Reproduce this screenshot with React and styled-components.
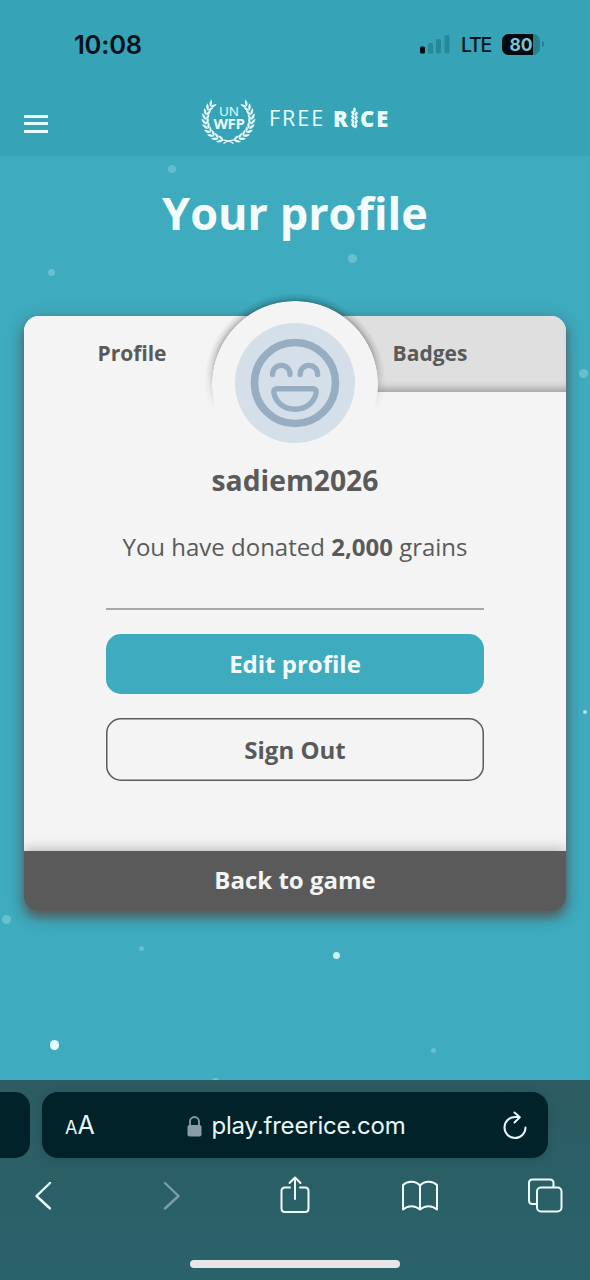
import React from "react";
import styled, { createGlobalStyle } from "styled-components";

const GlobalStyle = createGlobalStyle`
  * { box-sizing: border-box; }
  body { margin: 0; background: #3eabbe; }
  button { border: 0; padding: 0; margin: 0; background: none; font: inherit; color: inherit; }
`;

const Screen = styled.div`
  position: relative;
  display: flex;
  flex-direction: column;
  width: 590px;
  height: 1280px;
  overflow: hidden;
  background: #3eabbe;
  font-family: "Open Sans", sans-serif;
  color: #5a5a5a;
`;

const Speck = styled.i`
  position: absolute;
  left: ${(p) => p.$x}px;
  top: ${(p) => p.$y}px;
  width: ${(p) => p.$size}px;
  height: ${(p) => p.$size}px;
  margin: ${(p) => -p.$size / 2}px;
  border-radius: 50%;
  background: #e6fbff;
  opacity: ${(p) => p.$alpha};
  filter: blur(0.5px);
`;

const TopArea = styled.div`
  position: relative;
  flex: none;
  height: 156px;
  background: #37a3b7;
`;

const StatusBar = styled.div`
  display: flex;
  align-items: center;
  justify-content: space-between;
  height: 88px;
  padding: 0 50px 0 74px;
  font-family: Inter, sans-serif;
  color: #03101a;
`;

const Clock = styled.span`
  font-size: 25.5px;
  font-weight: 600;
  letter-spacing: -0.2px;
`;

const StatusIcons = styled.div`
  display: flex;
  align-items: center;
`;

const Network = styled.span`
  margin: 1px 0 0 11px;
  width: 41px;
  font-size: 19.5px;
  font-weight: 500;
  letter-spacing: -1.2px;
`;

const Battery = styled.div`
  position: relative;
  width: 38px;
  height: 21px;
  border-radius: 6.5px;
  background: linear-gradient(90deg, #020a10 31px, #25808f 31px);
  color: #7fc3cf;
  font-size: 17.5px;
  font-weight: 700;
  line-height: 21px;
  text-align: center;
  &::after {
    content: "";
    position: absolute;
    right: -4px;
    top: 7.5px;
    width: 2px;
    height: 6px;
    border-radius: 0 2px 2px 0;
    background: #25808f;
  }
`;

const NavBar = styled.header`
  display: flex;
  align-items: flex-start;
  padding: 9px 24px 0;
  color: #e9fdff;
`;

const MenuButton = styled.button`
  display: flex;
  flex-direction: column;
  gap: 4.5px;
  width: 24px;
  margin: 17.500px 153px 0 0;
  span { height: 3px; background: #e9fdff; }
`;

const Brand = styled.div`
  display: flex;
  height: 48px;
`;

const Emblem = styled.div`
  position: relative;
  width: 56px;
  height: 48px;
`;

const EmblemText = styled.div`
  position: absolute;
  inset: 8px 0 0 0;
  display: flex;
  flex-direction: column;
  align-items: center;
  font-size: 13.5px;
  line-height: 12px;
  b { font-size: 15px; letter-spacing: -0.4px; }
`;

const Wordmark = styled.div`
  display: flex;
  margin: 6px 0 0 11px;
  font-size: 22px;
  line-height: 30px;
`;

const Free = styled.span`
  width: 64px;
  font-weight: 400;
  margin-left: 1px;
  font-size: 21.5px;
  letter-spacing: 2px;
`;

const Rice = styled.span`
  display: flex;
  font-weight: 800;
  letter-spacing: 2px;
  svg { margin: 4px 0 0 -1px; }
`;

const Title = styled.h1`
  position: relative;
  flex: none;
  margin: 24px 0 0;
  height: 136px;
  font-size: 45px;
  line-height: 66px;
  font-weight: 700;
  text-align: center;
  color: #f4fbfc;
`;

const Card = styled.main`
  position: relative;
  flex: none;
  display: flex;
  flex-direction: column;
  align-items: center;
  width: 542px;
  height: 595px;
  margin: 0 24px;
  border-radius: 15px;
  background: linear-gradient(#f4f4f4 560px, #5a5a5a 560px);
  box-shadow: 0 6px 11px rgba(90, 80, 80, 0.85), 0 4px 18px rgba(60, 80, 85, 0.3);
`;

const Tabs = styled.div`
  display: grid;
  grid-template-columns: 271px 271px;
  width: 100%;
  height: 75.5px;
  border-radius: 15px 15px 0 0;
  overflow: hidden;
`;

const Tab = styled.button`
  padding-right: ${(p) => (p.$active ? 55 : 1)}px;
  display: block;
  height: 75.5px;
  font-size: 21px;
  line-height: 72px;
  padding-bottom: 1.5px;
  font-weight: 700;
  text-align: center;
  background: ${(p) => (p.$active ? "#f4f4f4" : "#dfdfdf")};
  box-shadow: ${(p) => (p.$active ? "none" : "inset 0 -9px 8px -6px rgba(0,0,0,0.3)")};
`;

const AvatarRing = styled.div`
  position: absolute;
  left: 188px;
  top: -15.5px;
  width: 166px;
  height: 166px;
  border-radius: 50%;
  background: #f4f4f4;
  &::before {
    content: "";
    position: absolute;
    inset: -10px;
    background: radial-gradient(circle, transparent 82.5px, rgba(0, 0, 0, 0.26) 83px, rgba(0, 0, 0, 0.1) 86.5px, transparent 91px);
    mask-image: linear-gradient(#000 30%, transparent 64%);
  }
`;

const Avatar = styled.div`
  position: absolute;
  left: 23px;
  top: 22.5px;
  width: 120px;
  height: 120px;
  border-radius: 50%;
  background: #d4dfea;
  svg { display: block; }
`;

const Username = styled.h2`
  margin: 68.5px 0 0;
  font-size: 28.3px;
  line-height: 40px;
  font-weight: 700;
`;

const Donated = styled.p`
  margin: 29.5px 0 0;
  font-size: 24px;
  line-height: 34px;
`;

const Divider = styled.hr`
  width: 378px;
  height: 1.5px;
  margin: 44.5px 0 24px;
  border: 0;
  background: #a8a8a8;
`;

const Action = styled.button`
  flex: none;
  width: 378px;
  height: ${(p) => (p.$outline ? 63 : 60)}px;
  padding-top: ${(p) => (p.$outline ? 2 : 0)}px;
  margin-bottom: 24px;
  border-radius: 15px;
  box-shadow: ${(p) => (p.$outline ? "inset 0 0 0 1.5px #5a5a5a" : "none")};
  background: ${(p) => (p.$outline ? "transparent" : "#3eabbe")};
  color: ${(p) => (p.$outline ? "#5a5a5a" : "#f4fbfc")};
  font-size: 24px;
  line-height: 60px;
  font-weight: 700;
`;

const BackButton = styled.button`
  width: 100%;
  height: 60px;
  padding-bottom: 2px;
  margin-top: auto;
  border-radius: 0 0 15px 15px;
  background: #5a5a5a;
  color: #f4f4f4;
  font-size: 24px;
  line-height: 58px;
  font-weight: 700;
  box-shadow: 0 -3px 12px rgba(0, 0, 0, 0.22);
  clip-path: inset(-20px 0 0 0 round 0 0 15px 15px);
`;

const BrowserBar = styled.footer`
  position: relative;
  flex: none;
  height: 200px;
  margin-top: auto;
  padding-top: 12px;
  background: linear-gradient(#2d5c62, #2b5f66 45%, #2a626b);
`;

const AddressRow = styled.div`
  display: flex;
  gap: 12px;
`;

const PreviousPage = styled.div`
  width: 30px;
  height: 66px;
  border-radius: 0 15px 15px 0;
  background: #012229;
`;

const AddressField = styled.div`
  display: flex;
  align-items: center;
  width: 506px;
  height: 66px;
  padding: 2px 21px 0 23px;
  border-radius: 16px;
  background: #012229;
  box-shadow: 0 1px 8px rgba(0, 30, 35, 0.2);
  font-family: Inter, sans-serif;
  color: #e8f8fa;
`;

const TextSize = styled.span`
  width: 122px;
  font-size: 25px;
  line-height: 32px;
  padding-top: 1px;
  small { font-size: 18px; }
`;

const Url = styled.span`
  margin-left: 9.5px;
  width: 195px;
  font-size: 24px;
  line-height: 30px;
  letter-spacing: -0.2px;
  white-space: nowrap;
`;

const ReloadIcon = styled.svg`
  margin-left: auto;
`;

const Toolbar = styled.nav`
  display: grid;
  grid-template-columns: 92px 159px 92px 157px 94px;
  justify-items: center;
  align-items: center;
  height: 44px;
  margin: 15px 0 0 -2px;
  color: #effcfd;
  svg { display: block; fill: none; stroke: currentColor; stroke-width: 2; stroke-linecap: round; stroke-linejoin: round; }
`;

const ChevronIcon = styled.svg`
  && { stroke-width: 2.4; }
  opacity: ${(p) => (p.$disabled ? 0.4 : 1)};
`;

const HomeIndicator = styled.div`
  width: 210px;
  height: 8px;
  margin: 43px auto 0;
  border-radius: 4px;
  background: #e6e6e6;
`;

const specks = [
  [172, 169, 8, 0.22], [51, 272, 7, 0.25], [352, 258, 9, 0.25], [583, 373, 9, 0.27],
  [585, 712, 4, 0.7], [6, 919, 9, 0.25], [141, 948, 5, 0.25], [336.5, 955, 7, 0.85],
  [54.5, 1045, 9.5, 1], [433, 1050, 5, 0.25], [215, 1081, 7, 0.3],
];

const LEAF = "M0 0C1.2 -2 4 -2.3 6.6 -.5C4.2 1.1 1.6 1.2 0 0Z";

function Branch() {
  const leaves = [];
  for (let i = 0; i < 10; i += 1) {
    const deg = 104 + i * 12.6;
    const a = (deg * Math.PI) / 180;
    const x = 27 + 22.7 * Math.cos(a);
    const y = 20.5 + 21.2 * Math.sin(a);
    leaves.push(
      <g key={i} transform={`translate(${x} ${y}) rotate(${deg + 90})`}>
        <path d={LEAF} transform="rotate(-24) scale(1.1 1)" />
        <path d={LEAF} transform="rotate(27) scale(1 -0.95)" />
      </g>
    );
  }
  return (
    <g>
      {leaves}
      <path d="M20 41.2Q27 40.8 32 44.6" fill="none" stroke="currentColor" strokeWidth="1.3" />
    </g>
  );
}

function Laurel() {
  return (
    <svg width="56" height="48" viewBox="-0.5 -2 56 48" fill="currentColor">
      <Branch />
      <g transform="translate(54 0) scale(-1 1)"><Branch /></g>
    </svg>
  );
}

function RiceStalk() {
  const grains = [[5, 3, 0], [3.4, 6, -28], [6.6, 7, 28], [3.4, 10, -28], [6.6, 11, 28], [3.2, 14, -28], [6.6, 15, 28], [3.4, 18, -28], [6.2, 19, 28]];
  return (
    <svg width="11" height="24" viewBox="0 0 10 24" fill="currentColor">
      {grains.map(([x, y, r]) => (
        <ellipse key={y} cx={x} cy={y} rx="1.35" ry="2.4" transform={`rotate(${r} ${x} ${y})`} />
      ))}
    </svg>
  );
}

function Smiley() {
  return (
    <svg width="120" height="120" fill="none" stroke="#97adc2" strokeLinecap="round" strokeLinejoin="round">
      <circle cx="60" cy="60" r="40.500" strokeWidth="7.600" />
      <path d="M37.600 51.500V51a8.700 8.700 0 0 1 17.400 0v.5M65.200 51.500V51a8.700 8.700 0 0 1 17.400 0v.5" strokeWidth="5.300" />
      <path d="M42 65.800h36c2.300 0 3.500 1.500 3.200 3.600C79.500 79.500 71 86.200 60 86.200S40.500 79.500 38.800 69.400C38.500 67.300 39.700 65.800 42 65.800Z" strokeWidth="5.400" />
    </svg>
  );
}

export default function App() {
  return (
    <Screen>
      <GlobalStyle />
      {specks.map(([x, y, size, alpha]) => (
        <Speck key={`${x}-${y}`} $x={x} $y={y} $size={size} $alpha={alpha} />
      ))}
      <TopArea>
        <StatusBar>
          <Clock>10:08</Clock>
          <StatusIcons>
            <svg width="30" height="20" fill="#25899a">
              <rect x="0" y="12.500" width="5" height="7" rx="1.500" fill="#020a10" />
              <rect x="8" y="9" width="5" height="10.500" rx="1.500" />
              <rect x="16" y="5" width="5" height="14.500" rx="1.500" />
              <rect x="24.500" y="1" width="5" height="18.500" rx="1.500" />
            </svg>
            <Network>LTE</Network>
            <Battery>80</Battery>
          </StatusIcons>
        </StatusBar>
        <NavBar>
          <MenuButton aria-label="Menu"><span /><span /><span /></MenuButton>
          <Brand>
            <Emblem>
              <Laurel />
              <EmblemText><span>UN</span><b>WFP</b></EmblemText>
            </Emblem>
            <Wordmark>
              <Free>FREE</Free>
              <Rice>R<RiceStalk />CE</Rice>
            </Wordmark>
          </Brand>
        </NavBar>
      </TopArea>
      <Title>Your profile</Title>
      <Card>
        <Tabs>
          <Tab $active>Profile</Tab>
          <Tab>Badges</Tab>
        </Tabs>
        <AvatarRing>
          <Avatar><Smiley /></Avatar>
        </AvatarRing>
        <Username>sadiem2026</Username>
        <Donated>You have donated <b>2,000</b> grains</Donated>
        <Divider />
        <Action>Edit profile</Action>
        <Action $outline>Sign Out</Action>
        <BackButton>Back to game</BackButton>
      </Card>
      <BrowserBar>
        <AddressRow>
          <PreviousPage />
          <AddressField>
            <TextSize><small>A</small>A</TextSize>
            <svg width="15" height="21" viewBox="0 0 15 21">
              <path d="M3 10V5.500a4.500 4.500 0 0 1 9 0V10" fill="none" stroke="#8a9da4" strokeWidth="1.800" />
              <rect x="0.500" y="9" width="14" height="11.500" rx="2" fill="#8a9da4" />
            </svg>
            <Url>play.freerice.com</Url>
            <ReloadIcon width="24" height="30" fill="none" stroke="#e8f8fa" strokeWidth="2" strokeLinecap="round" strokeLinejoin="round">
              <path d="M22.500 16.500A10.500 10.500 0 1 1 12 6h4.500M11.500 1.500L16.800 6.200L11.500 11.500" />
            </ReloadIcon>
          </AddressField>
        </AddressRow>
        <Toolbar>
          <ChevronIcon width="26" height="40"><path d="M19 8L5.500 21L19 33.500" /></ChevronIcon>
          <ChevronIcon $disabled width="26" height="40"><path d="M8 8L21.500 21L8 33.500" /></ChevronIcon>
          <svg width="30" height="40"><path d="M10 12.500H5Q1.500 12.500 1.500 16V33.500Q1.500 37 5 37H25Q28.500 37 28.500 33.500V16Q28.500 12.500 25 12.500H20M15 24V2.500M9.500 8L15 2.500L20.500 8" /></svg>
          <svg width="38" height="40"><path d="M19 10.500C14 5 6 6 2 10V34.500C7 30 14 30 19 34.500C24 30 31 30 36 34.500V10C32 6 24 5 19 10.500V34.500" /></svg>
          <svg width="36" height="40"><path d="M9.500 29H5.500Q2 29 2 25.500V8Q2 4.500 5.500 4.500H23Q26.500 4.500 26.500 8V12" /><rect x="10" y="12.500" width="24.500" height="24" rx="4" /></svg>
        </Toolbar>
        <HomeIndicator />
      </BrowserBar>
    </Screen>
  );
}
